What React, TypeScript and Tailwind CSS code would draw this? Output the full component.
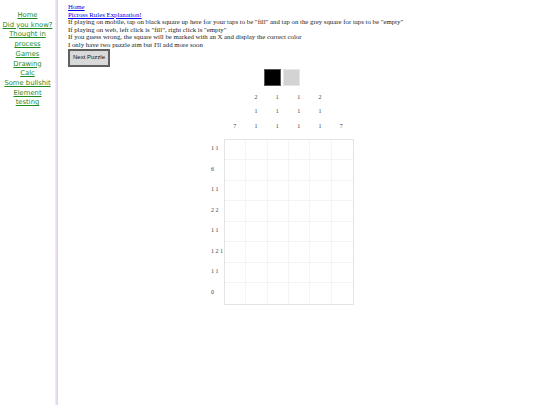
import React from "react";

const navLinks = ["Home", "Did you know?", "Thought in process", "Games", "Drawing", "Calc", "Some bullshit", "Element testing"];

const colClues = [
  ["", "2", "1", "1", "2", ""],
  ["", "1", "1", "1", "1", ""],
  ["7", "1", "1", "1", "1", "7"],
];

const rowClues = ["1 1", "6", "1 1", "2 2", "1 1", "1 2 1", "1 1", "0"];

export default function App() {
  return (
    <div className="flex min-h-[405px] w-[540px] bg-white font-['Liberation_Serif',serif]">
      <aside className="w-[55px] shrink-0 px-[1.5px] pt-[11px] text-center font-['DejaVu_Sans',sans-serif] text-[6.8px] leading-[9.7px] text-[#1f8a1f]">
        {navLinks.map((label) => (
          <div key={label}>
            <a href="#" className="underline">
              {label}
            </a>
          </div>
        ))}
      </aside>
      <div className="w-[3px] shrink-0 bg-gradient-to-r from-[#f6eefa] to-[#dccbe9]" />
      <main className="flex-1 pl-[10px] pt-[3px] text-[6.8px] leading-[7.6px] text-[#1a1a1a]">
        <a href="#" className="block text-[#0000ee] underline">Home</a>
        <a href="#" className="block text-[#0000ee] underline">Picross Rules Explanation!</a>
        <p>If playing on mobile, tap on black square up here for your taps to be "fill" and tap on the grey square for taps to be "empty"</p>
        <p>If playing on web, left click is "fill", right click is "empty"</p>
        <p>If you guess wrong, the square will be marked with an X and display the correct color</p>
        <p>I only have two puzzle atm but I'll add more soon</p>
        <button className="mt-[0.5px] h-[18px] w-[42px] border-2 border-[#5f5f5f] bg-[#d9d9d9] font-['Liberation_Sans',sans-serif] text-[6px] text-[#111]">
          Next Puzzle
        </button>
        <div className="ml-[196px] mt-[2px] flex gap-[2px]">
          <div className="h-[17px] w-[17px] border border-[#555] bg-black" />
          <div className="h-[17px] w-[17px] border border-[#e6e6e6] bg-[#d3d3d3]" />
        </div>
        <div className="ml-[142px] mt-[4px] text-[6px] text-[#444]">
          {colClues.map((row, i) => (
            <div key={i} className="flex h-[14.5px] items-center pl-[14px]">
              {row.map((c, j) => (
                <div key={j} className="w-[21.33px] text-center">
                  {c}
                </div>
              ))}
            </div>
          ))}
          <div className="mt-[5px] flex">
            <div className="w-[14px]">
              {rowClues.map((c, i) => (
                <div key={i} className="flex h-[20.5px] items-center pl-[1px] whitespace-nowrap">
                  {c}
                </div>
              ))}
            </div>
            <div className="grid grid-cols-[repeat(6,21.33px)] grid-rows-[repeat(8,20.5px)] border border-[#e4e4e4]">
              {Array.from({ length: 48 }).map((_, i) => (
                <div
                  key={i}
                  className={`${i % 6 !== 5 ? "border-r" : ""} ${i < 42 ? "border-b" : ""} border-[#f4f4f4]`}
                />
              ))}
            </div>
          </div>
        </div>
      </main>
    </div>
  );
}
